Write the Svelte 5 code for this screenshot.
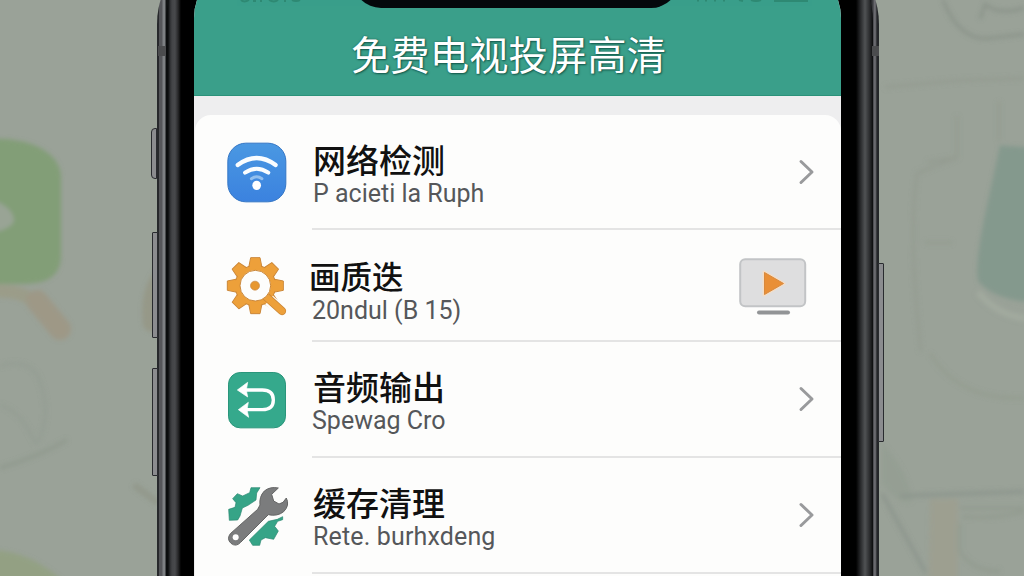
<script lang="ts">
  interface Row {
    icon: 'wifi' | 'gear' | 'audio' | 'tools';
    title: string;
    sub: string;
    trailing: 'chevron' | 'cast';
  }

  const rows: Row[] = [
    { icon: 'wifi', title: '网络检测', sub: 'P acieti la Ruph', trailing: 'chevron' },
    { icon: 'gear', title: '画质迭', sub: '20ndul (B 15)', trailing: 'cast' },
    { icon: 'audio', title: '音频输出', sub: 'Spewag Cro', trailing: 'chevron' },
    { icon: 'tools', title: '缓存清理', sub: 'Rete. burhxdeng', trailing: 'chevron' },
  ];

  const teeth = [0, 45, 90, 135, 180, 225, 270, 315];
</script>

<div class="stage">
  <svg class="backdrop" viewBox="0 0 1024 576" aria-hidden="true">
    <defs>
      <filter id="soft"><feGaussianBlur stdDeviation="2.2" /></filter>
    </defs>
    <g filter="url(#soft)" fill="none">
      <path d="M-10 139 C25 137 61 150 61 178 V255 C61 278 45 284 20 284 H-10Z" fill="#829e77" />
      <path d="M-4 201 Q14 209 14 221 Q12 228 -4 232Z" fill="#99a495" />
      <g opacity="0.8">
        <path d="M-5 291 Q18 290 33 300" stroke="#9c9b86" stroke-width="13" />
        <path d="M37 301 L60 329" stroke="#9f9783" stroke-width="22" stroke-linecap="round" />
        <path d="M155 270 Q139 292 143 325 Q147 335 157 330Z" fill="#959685" />
        <path d="M-5 550 Q30 552 62 580 H-5Z" fill="#91a07f" />
      </g>
      <g opacity="0.6">
        <path d="M0 366 Q35 356 42 388 Q51 420 36 445 M0 405 Q22 412 35 443" stroke="#929b91" stroke-width="3" />
        <path d="M0 468 Q40 456 67 440" stroke="#8d968a" stroke-width="4" />
        <path d="M134 485 L158 503" stroke="#8e9384" stroke-width="6" />
      </g>
      <g transform="scale(1 1.102)">
        <path d="M930 453 H958 V576 H928Z" fill="#9d9f8e" opacity="0.8" />
        <path d="M1000 132 L1030 134 V274 Q994 272 978 255 Q975 240 984 199Z" fill="#84998d" />
        <path d="M978 265 Q997 286 1026 289" stroke="#a2aa9f" stroke-width="6" />
        <g opacity="0.65">
          <path d="M943 0 Q958 35 986 35 L1024 31 M980 17 L985 4 Q1000 14 1024 7" stroke="#858e84" stroke-width="3" />
          <path d="M885 79 L960 73 L1024 71 M957 105 V143 L917 157 Q908 214 921 319 M927 147 L956 143 M999 92 V128" stroke="#929a90" stroke-width="3" />
          <path d="M930 321 Q960 364 1024 361 M925 220 H952" stroke="#929b8e" stroke-width="3" />
          <path d="M882 402 Q910 430 912 455 Q900 460 882 438Z" fill="#929d91" />
          <path d="M882 448 L926 520 M900 450 L1024 446" stroke="#89928a" stroke-width="4" />
          <path d="M960 461 L1024 461 M962 469 Q1000 471 1024 464 M960 475 V501 Q974 519 1000 518" stroke="#90998d" stroke-width="3" />
        </g>
      </g>
    </g>
  </svg>

  <div class="phone">
    <i class="key mute"></i>
    <i class="key vol-up"></i>
    <i class="key vol-down"></i>
    <i class="key power"></i>
    <i class="seam left"></i>
    <i class="seam right"></i>

    <div class="rim">
      <div class="screen">
        <svg class="status" viewBox="0 0 647 4">
          <g fill="none" stroke="#2a806a" stroke-width="2">
            <path d="M47 0 Q50 3 55 0 M59 1 H62 M67 0 V2 M75 0 Q80 3 84 0 M91 0 V2 M98 0 Q102 2 106 0" />
            <path d="M504 0 V1.500 M512 0 V1.500 M521 0 V1.500 M530 0 V1.500 M545 0 L549 1 M557 0 Q562 2 567 0 M580 1 H614" />
          </g>
        </svg>
        <div class="notch"></div>
        <header><h1>免费电视投屏高清</h1></header>

        <ul class="card">
          {#each rows as row}
            <li class="row {row.icon}">
              {#if row.icon === 'wifi'}
                <svg class="icon" viewBox="50 35 180 180">
                  <defs>
                    <linearGradient id="blue" x1="0" y1="0" x2="0" y2="1">
                      <stop offset="0" stop-color="#4a98e2" />
                      <stop offset="1" stop-color="#3b82df" />
                    </linearGradient>
                  </defs>
                  <rect x="52.500" y="38.500" width="174" height="176" rx="54" fill="url(#blue)" stroke="#3476c5" stroke-width="3" />
                  <g fill="none" stroke="#fafdff" stroke-linecap="round">
                    <path d="M82 104 Q139 62 196 104" stroke-width="13" />
                    <path d="M104 127 Q139 103 174 127" stroke-width="12" />
                    <path d="M123 145 Q139 134 155 145" stroke="#92bfee" stroke-width="9" />
                  </g>
                  <ellipse cx="139" cy="165" rx="13" ry="14" fill="#fff" />
                </svg>
              {:else if row.icon === 'gear'}
                <svg class="icon" viewBox="50 33 180 180">
                  <g fill="#eda03a" stroke="#cb8739" stroke-width="3" stroke-linejoin="round">
                    {#each teeth as angle}
                      <path d="M115 68 L121 38 H149 L155 68Z" transform="rotate({angle} 135 122)" />
                    {/each}
                    <circle cx="135" cy="122" r="61" />
                  </g>
                  <g fill="#eda03a">
                    {#each teeth as angle}
                      <path d="M117 70 L122.500 40 H147.500 L153 70Z" transform="rotate({angle} 135 122)" />
                    {/each}
                  </g>
                  <path d="M176 166 L222 206" stroke="#fdfdfb" stroke-width="36" />
                  <path d="M164 152 L215 198" stroke="#cb8739" stroke-width="25" stroke-linecap="round" />
                  <path d="M164 152 L215 198" stroke="#eda03a" stroke-width="20" stroke-linecap="round" />
                  <circle cx="135" cy="122" r="46" fill="#fdfdfc" stroke="#cb8739" stroke-width="3" />
                  <circle cx="134" cy="122" r="13.500" fill="#e79731" stroke="#c58341" stroke-width="2" />
                </svg>
              {:else if row.icon === 'audio'}
                <svg class="icon" viewBox="50 33 180 180">
                  <rect x="54.500" y="37.500" width="171" height="166" rx="35" fill="#35a98c" stroke="#2a967b" stroke-width="3" />
                  <path d="M106 90 H156 Q189 90 189 120 Q189 149 156 149 H106" fill="none" stroke="#fff" stroke-width="10" />
                  <path d="M81 90 L112 67 L108 90 L112 111Z M84 149 L114 127 L110 149 L115 172Z" fill="#fff" stroke="#fff" stroke-width="2" stroke-linejoin="round" />
                </svg>
              {:else}
                <svg class="icon" viewBox="50 33 180 180">
                  <g fill="#36a487" stroke="#28876f" stroke-width="2" stroke-linejoin="round">
                    <path d="M55 103 L74 97 L77 83 L67 71 L81 56 L97 63 L118 53 L122 38 L149 38 L139 54 L137 75 L113 91 L96 99 L89 123 L82 135 L57 136Z" />
                    <path d="M117 195 L174 139 L201 133 L217 125 L217 134 L202 139 L193 154 L204 168 L190 193 L165 188 L152 195 L148 211 L127 211Z" />
                  </g>
                  <path d="M70 190 L164 94" stroke="#fcfcfa" stroke-width="44" fill="none" />
                  <path d="M149 90 Q146 65 162 48 Q179 34 204 39 L184 58 L190 78 L206 87 L218 82 L228 69 Q239 91 220 110 Q201 125 174 119 L91 202 Q77 217 62 205 Q48 192 60 176 L142 103Z" fill="#7b7c7d" stroke="#646565" stroke-width="3" stroke-linejoin="round" />
                  <circle cx="76" cy="187" r="9" fill="#fff" />
                </svg>
              {/if}

              <div class="body">
                <div class="text">
                  <h2>{row.title}</h2>
                  <p>{row.sub}</p>
                </div>
                {#if row.trailing === 'chevron'}
                  <svg class="chevron" viewBox="0 0 18 28">
                    <path d="M3 3.500 L14 14 L3 24.500" />
                  </svg>
                {:else}
                  <svg class="cast" viewBox="0 0 68 58">
                    <rect x="1.200" y="1.200" width="65" height="47" rx="5" fill="#dededf" stroke="#c2c4c6" stroke-width="2" />
                    <path d="M25 14 V37 L45 25.500Z" fill="#e98f36" stroke="#f4ddc5" stroke-width="3" stroke-linejoin="round" />
                    <path d="M25.500 14.500 V36.500 L44.500 25.500Z" fill="#e98f36" stroke="#d9893c" stroke-linejoin="round" />
                    <path d="M20 54.500 H49" stroke="#929496" stroke-width="4" stroke-linecap="round" />
                  </svg>
                {/if}
              </div>
            </li>
          {/each}
        </ul>
      </div>
    </div>
  </div>
</div>

<style>
  :global(body) {
    margin: 0;
    overflow: hidden;
  }
  .stage {
    position: relative;
    width: 1024px;
    height: 576px;
    overflow: hidden;
    background: #9aa298;
    font-family: Roboto, 'Noto Sans CJK SC', sans-serif;
  }
  .backdrop {
    position: absolute;
    inset: 0;
  }
  .phone {
    position: relative;
    box-sizing: border-box;
    width: 722px;
    height: 760px;
    margin: -58px 0 0 157px;
    padding: 3px;
    border-radius: 82px;
    background: linear-gradient(90deg, #27292c 0 2px, #55565a 2px 5px, #7d8083 6px 8px, #111314 9px 713px, #424347 716px, #77777c 718px, #242629 720px);
  }
  .rim {
    box-sizing: border-box;
    height: 100%;
    margin: 0 3px 0 6px;
    padding: 18px 28px 0;
    border-radius: 76px;
    background: linear-gradient(90deg, #0b0d0e 0 2px, #2e2f32 4px, #434447 6px, #48494c 9px, #29292b 12px, #000 15px 690px, #242527 694px, #505254 699px, #28292b 704px, #0b0c0d 707px);
  }
  .key {
    position: absolute;
    box-sizing: border-box;
    width: 6px;
    border: 1.5px solid #292b2f;
    border-radius: 1px;
    background: #8b8c8f;
  }
  .mute {
    left: -6px;
    top: 186px;
    height: 51px;
    border-radius: 4px 0 0 4px;
  }
  .vol-up {
    left: -5px;
    top: 290px;
    height: 106px;
  }
  .vol-down {
    left: -5px;
    top: 426px;
    height: 108px;
  }
  .power {
    right: -5px;
    top: 321px;
    height: 179px;
  }
  .seam {
    position: absolute;
    top: 104px;
    width: 8px;
    height: 10px;
    background: #4b4c4e;
  }
  .seam.left {
    left: 1px;
  }
  .seam.right {
    right: 0;
    width: 7px;
  }
  .screen {
    position: relative;
    width: 647px;
    height: 700px;
    overflow: hidden;
    border-radius: 55px;
    background: #eeeeef;
  }
  .status {
    position: absolute;
    top: 37px;
    left: 0;
    width: 647px;
    height: 4px;
    opacity: 0.7;
  }
  .notch {
    position: absolute;
    left: 159px;
    top: 0;
    width: 326px;
    height: 45px;
    border-radius: 0 0 28px 28px;
    background: #04080b;
  }
  header {
    display: flex;
    align-items: flex-end;
    justify-content: center;
    box-sizing: border-box;
    height: 133px;
    padding: 0 18px 13px 0;
    border-bottom: 1px solid #2b927a;
    background: #3a9f8a;
  }
  h1 {
    margin: 0;
    font-size: 39.4px;
    line-height: 50px;
    font-weight: 400;
    color: #fff;
    text-shadow:
      0 0 2px rgb(0 60 50 / 55%),
      1px 1px 2px rgb(0 50 40 / 60%);
    white-space: nowrap;
  }
  .card {
    height: 500px;
    margin: 19px 0 0 1px;
    padding: 0;
    list-style: none;
    border-radius: 16px 16px 0 0;
    background: #fdfdfc;
  }
  .row {
    display: grid;
    grid-template-columns: 60px 1fr;
    column-gap: 25px;
    height: 115px;
    padding-left: 32px;
  }
  .row.gear {
    height: 112px;
  }
  .row.audio,
  .row.tools {
    height: 116px;
  }
  .icon {
    width: 60px;
    height: 60px;
    margin-top: 27px;
    overflow: visible;
  }
  .gear .icon {
    margin-top: 26px;
  }
  .audio .icon {
    margin-top: 29px;
  }
  .tools .icon {
    margin-top: 28px;
  }
  .body {
    display: flex;
    align-items: flex-start;
    justify-content: space-between;
    box-sizing: border-box;
    padding: 28px 25px 0 0;
    border-bottom: 2px solid #e4e4e4;
  }
  .gear .body {
    padding: 28px 34px 0 0;
  }
  .text {
    margin-top: 2px;
    white-space: nowrap;
  }
  h2 {
    margin: 0 0 0 1px;
    font-size: 33px;
    line-height: 33px;
    font-weight: 500;
    color: #111;
  }
  .gear h2 {
    margin: 2px 0 0 -3px;
    font-size: 31.5px;
  }
  p {
    margin: 0;
    font-size: 25px;
    line-height: 32px;
    color: #55575a;
  }
  .wifi p {
    margin-left: 1px;
  }
  .tools p {
    margin-left: 1px;
    letter-spacing: 0.15px;
  }
  .chevron {
    width: 18px;
    height: 28px;
    margin-top: 15px;
  }
  .chevron path {
    fill: none;
    stroke: #999a9c;
    stroke-width: 3;
    stroke-linecap: round;
    stroke-linejoin: round;
  }
  .cast {
    width: 68px;
    height: 58px;
  }
</style>
